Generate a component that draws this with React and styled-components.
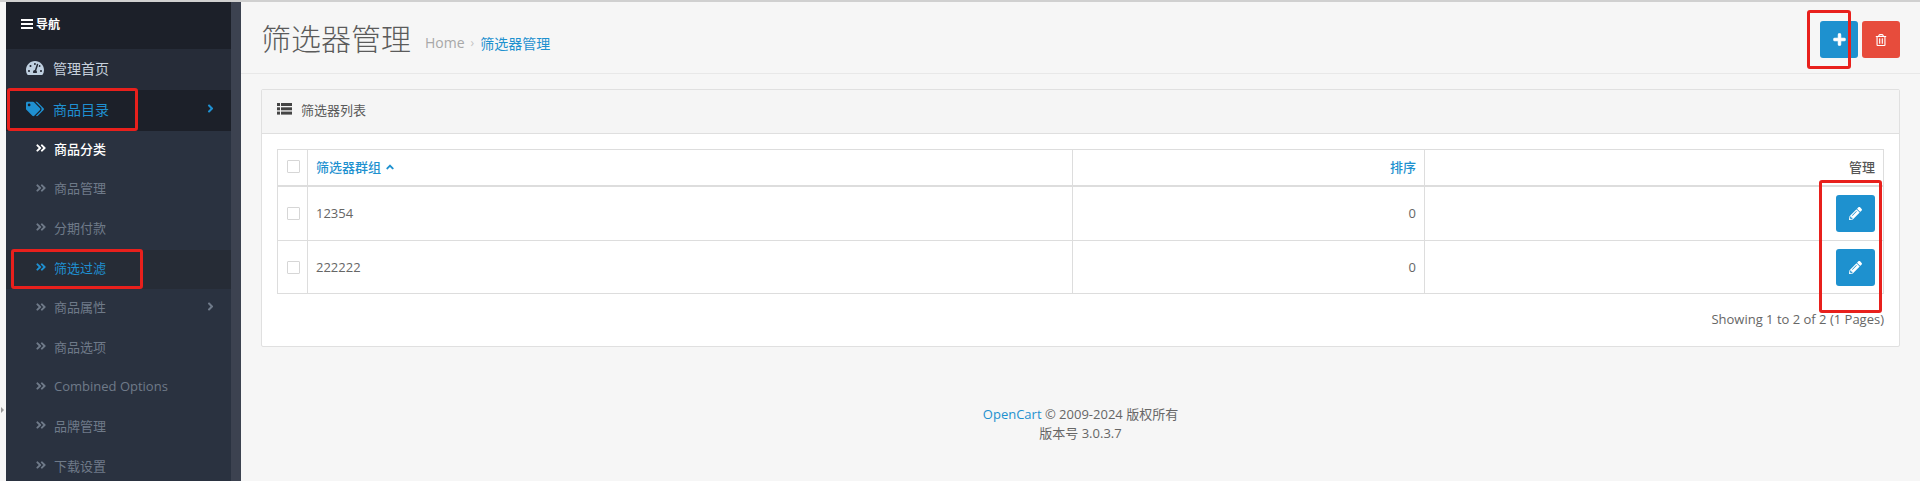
import React from "react";
import styled, { createGlobalStyle } from "styled-components";
import { FaTachometerAlt, FaTags, FaAngleRight, FaAngleDoubleRight, FaPlus, FaRegTrashAlt, FaPencilAlt, FaAngleUp } from "react-icons/fa";

const Global = createGlobalStyle`
  html, body { margin: 0; padding: 0; height: 481px; overflow: hidden; background: #f6f6f6; }
  body { font-family: "Open Sans", "Noto Sans CJK SC", sans-serif; font-size: 13px; color: #666; }
  * { box-sizing: border-box; }
`;

const Page = styled.div`
  position: relative; width: 1920px; height: 481px; overflow: hidden;
  border-top: 2px solid #d0d0d0; display: flex; background: #f6f6f6;
`;
const Gutter = styled.div`
  width: 6px; flex: none; position: relative;
  &::after { content: ""; position: absolute; left: 1px; top: 405px; border-left: 3px solid #999; border-top: 3px solid transparent; border-bottom: 3px solid transparent; }
`;
const Sidebar = styled.nav`
  width: 235px; flex: none; background: #2a3240; border-right: 10px solid #3c4250; overflow: hidden;
`;
const NavHead = styled.div`
  height: 47px; background: #1c2029; color: #fff; font-size: 12px; font-weight: 700;
  display: flex; align-items: center; padding-left: 15px; padding-bottom: 4px; gap: 2px;
`;
const TopItem = styled.div`
  height: 41px; display: flex; align-items: center; padding: 0 14px 4px 20px;
  background: ${p => p.$active ? "#1c2029" : "#262c38"};
  color: ${p => p.$active ? "#1f90d1" : "#c6d0dc"};
  font-size: 14px;
`;
const TopIcon = styled.span`
  width: 27px; display: flex; font-size: 18px; color: ${p => p.$active ? "#1f90d1" : "#bfd0e0"};
`;
const SubItem = styled.div`
  height: 39.6px; display: flex; align-items: center; padding: 0 14px 5px 29px;
  background: ${p => p.$sel ? "#262c36" : "transparent"};
  color: ${p => p.$sel ? "#1f90d1" : p.$cur ? "#fff" : "#6f7a89"};
  font-weight: ${p => p.$cur ? 500 : 400};
  font-size: 13px;
`;
const Dbl = styled.span`
  width: 19px; display: flex; font-size: 12px;
`;
const Grow = styled.span`flex: 1; white-space: nowrap;`;
const Caret = styled.span`display: flex; font-size: 13px;`;

const Main = styled.main`
  flex: 1; min-width: 0; display: flex; flex-direction: column;
`;
const PageHeader = styled.header`
  height: 72px; flex: none; border-bottom: 1px solid #e8e8e8;
  display: flex; align-items: center; padding: 0 20px;
`;
const Title = styled.h1`
  margin: 0; font-size: 30px; font-weight: 300; color: #5b5b5b; line-height: 1; white-space: nowrap; position: relative; top: 1px;
`;
const Crumbs = styled.div`
  flex: 1; display: flex; align-items: center; margin-left: 14px; padding-top: 10px;
  font-size: 14px; color: #a8a8a8; gap: 6px;
`;
const CrumbSep = styled.span`color: #c4c4c4; font-size: 12px;`;
const CrumbLink = styled.a`color: #1e91cf; font-size: 14px;`;
const Actions = styled.div`display: flex; gap: 4px; margin-top: 4px;`;
const Btn = styled.button`
  width: ${p => p.$w || 38}px; height: ${p => p.$h || 37}px; border: 0; border-radius: 3px; padding: 0;
  background: ${p => p.$danger ? "#e74c3c" : "#1e91cf"}; color: #fff;
  display: flex; align-items: center; justify-content: center; font-size: ${p => p.$danger ? 12 : 13}px;
`;
const Panel = styled.section`
  margin: 15px 20px 0; height: 258px; background: #fff; border: 1px solid #e0e0e0; border-radius: 2px; display: flex; flex-direction: column;
`;
const PanelHead = styled.div`
  height: 44px; flex: none; background: #f5f5f5; border-bottom: 1px solid #dfdfdf;
  display: flex; align-items: center; padding: 0 0 5px 15px; gap: 9px; color: #595959; font-size: 13px;
`;
const PanelBody = styled.div`padding: 15px;`;
const Table = styled.table`
  width: 100%; border-collapse: collapse; table-layout: fixed; font-size: 13px; border: 1px solid #ddd;
`;
const Th = styled.th`
  height: 36px; border: 1px solid #ddd; border-bottom: 2px solid #ddd; padding: 0 8px 2px;
  text-align: ${p => p.$right ? "right" : "left"}; font-weight: 500; color: ${p => p.$link ? "#1e91cf" : "#555"};
  white-space: nowrap;
`;
const Td = styled.td`
  height: ${p => p.$h}px; border: 1px solid #ddd; padding: 0 8px; text-align: ${p => p.$right ? "right" : "left"}; color: #666;
`;
const Check = styled.span`
  display: block; width: 13px; height: 13px; margin-left: 1px; border: 1px solid #d6d6d6; border-radius: 1px; background: #fff;
`;
const ActionWrap = styled.div`display: flex; justify-content: flex-end;`;
const SortIcon = styled.span`display: inline-flex; vertical-align: -1px; margin-left: 3px; font-size: 12px;`;
const Pager = styled.div`
  text-align: right; margin-top: 17px; font-size: 13px; color: #666; line-height: 17px;
`;
const Footer = styled.footer`
  margin-top: 58px; text-align: center; font-size: 13px; line-height: 19px; color: #666;
  a { color: #1e91cf; }
`;
const Mark = styled.div`
  position: absolute; border: 3px solid #e8201c; border-radius: 3px; pointer-events: none;
  left: ${p => p.$x}px; top: ${p => p.$y}px; width: ${p => p.$w}px; height: ${p => p.$h}px;
`;
const Glyph = styled.svg`display: block; flex: none; fill: currentColor;`;
const ListGlyph = styled(Glyph)`color: #444;`;
const BoldPlus = styled(FaPlus)`stroke: currentColor; stroke-width: 40;`;

const BarsIcon = () => (
  <Glyph width="13" height="10" viewBox="0 0 13 10">
    <rect width="12" height="2" x="0" y="0" /><rect width="12" height="2" x="0" y="4" /><rect width="12" height="2" x="0" y="8" />
  </Glyph>
);
const ListIcon = () => (
  <ListGlyph width="15" height="12" viewBox="0 0 15 12">
    {[0, 4.3, 8.6].map(y => (
      <React.Fragment key={y}>
        <rect x="0" y={y} width="3" height="3" /><rect x="4" y={y} width="11" height="3" />
      </React.Fragment>
    ))}
  </ListGlyph>
);

const subs = [
  { t: "商品分类", cur: true },
  { t: "商品管理" },
  { t: "分期付款" },
  { t: "筛选过滤", sel: true },
  { t: "商品属性", more: true },
  { t: "商品选项" },
  { t: "Combined Options" },
  { t: "品牌管理" },
  { t: "下载设置" },
];
const rows = [{ n: "12354", h: 55 }, { n: "222222", h: 53 }];

export default function App() {
  return (
    <>
      <Global />
      <Page>
        <Gutter />
        <Sidebar>
          <NavHead><BarsIcon />导航</NavHead>
          <TopItem><TopIcon><FaTachometerAlt /></TopIcon><Grow>管理首页</Grow></TopItem>
          <TopItem $active><TopIcon $active><FaTags /></TopIcon><Grow>商品目录</Grow><Caret><FaAngleRight /></Caret></TopItem>
          {subs.map(s => (
            <SubItem key={s.t} $cur={s.cur} $sel={s.sel}>
              <Dbl><FaAngleDoubleRight /></Dbl>
              <Grow>{s.t}</Grow>
              {s.more && <Caret><FaAngleRight /></Caret>}
            </SubItem>
          ))}
        </Sidebar>
        <Main>
          <PageHeader>
            <Title>筛选器管理</Title>
            <Crumbs>Home <CrumbSep>›</CrumbSep> <CrumbLink>筛选器管理</CrumbLink></Crumbs>
            <Actions>
              <Btn><BoldPlus /></Btn>
              <Btn $danger><FaRegTrashAlt /></Btn>
            </Actions>
          </PageHeader>
          <Panel>
            <PanelHead><ListIcon />筛选器列表</PanelHead>
            <PanelBody>
              <Table>
                <colgroup>
                  <col style={{ width: 30 }} />
                  <col style={{ width: 765 }} />
                  <col style={{ width: 352 }} />
                  <col />
                </colgroup>
                <thead>
                  <tr>
                    <Th><Check /></Th>
                    <Th $link>筛选器群组<SortIcon><FaAngleUp /></SortIcon></Th>
                    <Th $link $right>排序</Th>
                    <Th $right>管理</Th>
                  </tr>
                </thead>
                <tbody>
                  {rows.map(r => (
                    <tr key={r.n}>
                      <Td $h={r.h}><Check /></Td>
                      <Td $h={r.h}>{r.n}</Td>
                      <Td $h={r.h} $right>0</Td>
                      <Td $h={r.h} $right><ActionWrap><Btn $w={39}><FaPencilAlt /></Btn></ActionWrap></Td>
                    </tr>
                  ))}
                </tbody>
              </Table>
              <Pager>Showing 1 to 2 of 2 (1 Pages)</Pager>
            </PanelBody>
          </Panel>
          <Footer>
            <a>OpenCart</a> © 2009-2024 版权所有<br />版本号 3.0.3.7
          </Footer>
        </Main>
        <Mark $x={7} $y={86} $w={131} $h={43} />
        <Mark $x={11} $y={247} $w={132} $h={40} />
        <Mark $x={1807} $y={8} $w={44} $h={59} />
        <Mark $x={1819} $y={178} $w={63} $h={133} />
      </Page>
    </>
  );
}
